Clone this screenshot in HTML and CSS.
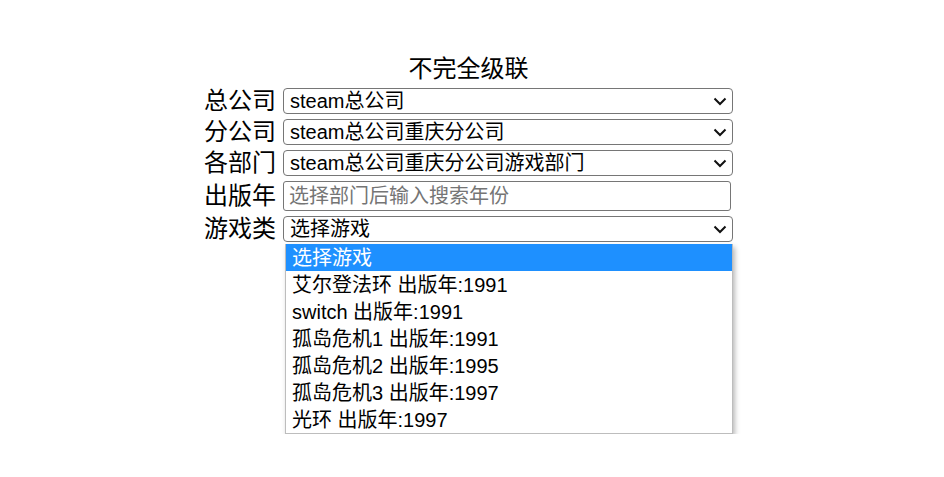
FILE: index.html
```html
<!DOCTYPE html>
<html lang="zh">
<head>
<meta charset="utf-8">
<title>不完全级联</title>
<link rel="stylesheet" href="styles.css">
</head>
<body>
<div class="page">
  <div class="panel">
    <div class="title">不完全级联</div>
    <div class="form">
      <span class="label">总公司</span>
      <div class="field">
        <div class="select">steam总公司</div>
        <svg class="chev" width="14" height="9" viewBox="0 0 14 9"><path d="M1.5 1.5 L7 7 L12.5 1.5" fill="none" stroke="#111" stroke-width="2"/></svg>
      </div>
      <span class="label">分公司</span>
      <div class="field">
        <div class="select">steam总公司重庆分公司</div>
        <svg class="chev" width="14" height="9" viewBox="0 0 14 9"><path d="M1.5 1.5 L7 7 L12.5 1.5" fill="none" stroke="#111" stroke-width="2"/></svg>
      </div>
      <span class="label">各部门</span>
      <div class="field">
        <div class="select">steam总公司重庆分公司游戏部门</div>
        <svg class="chev" width="14" height="9" viewBox="0 0 14 9"><path d="M1.5 1.5 L7 7 L12.5 1.5" fill="none" stroke="#111" stroke-width="2"/></svg>
      </div>
      <span class="label">出版年</span>
      <div class="field field-input">
        <input class="input" type="text" placeholder="选择部门后输入搜索年份">
      </div>
      <span class="label">游戏类</span>
      <div class="field">
        <div class="select">选择游戏</div>
        <svg class="chev" width="14" height="9" viewBox="0 0 14 9"><path d="M1.5 1.5 L7 7 L12.5 1.5" fill="none" stroke="#111" stroke-width="2"/></svg>
      </div>
      <div class="listbox">
        <div class="opt active">选择游戏</div>
        <div class="opt">艾尔登法环 出版年:1991</div>
        <div class="opt">switch 出版年:1991</div>
        <div class="opt">孤岛危机1 出版年:1991</div>
        <div class="opt">孤岛危机2 出版年:1995</div>
        <div class="opt">孤岛危机3 出版年:1997</div>
        <div class="opt">光环 出版年:1997</div>
      </div>
    </div>
  </div>
</div>
</body>
</html>
```

FILE: styles.css
```css
html, body {
  margin: 0;
  padding: 0;
  background: #ffffff;
}

body {
  font-family: "Liberation Sans", "Noto Sans CJK SC", sans-serif;
  color: #000;
}

.page {
  display: flex;
  justify-content: center;
  padding-top: 54px;
  padding-right: 7px;
}

.panel {
  width: 529px;
}

.title {
  font-size: 24px;
  line-height: 30px;
  height: 30px;
  text-align: center;
  margin-bottom: 4px;
}

.form {
  display: grid;
  grid-template-columns: 72px 450px;
  column-gap: 7px;
  row-gap: 5px;
  align-items: center;
}

.label {
  font-size: 24px;
  line-height: 26px;
  white-space: nowrap;
}

.field {
  position: relative;
  height: 26px;
}

.field-input {
  height: 30px;
}

.select {
  box-sizing: border-box;
  width: 450px;
  height: 26px;
  padding: 0 30px 0 6px;
  border: 1px solid #767676;
  border-radius: 4px;
  background: #fff;
  font-size: 20px;
  line-height: 24px;
  color: #000;
  white-space: nowrap;
}

.chev {
  position: absolute;
  right: 6px;
  top: 9px;
}

.input {
  box-sizing: border-box;
  width: 448px;
  height: 30px;
  margin: 0;
  padding: 0 5px;
  border: 1px solid #767676;
  border-radius: 3px;
  background: #fff;
  font-family: "Liberation Sans", "Noto Sans CJK SC", sans-serif;
  font-size: 20px;
  outline: none;
}

.input::placeholder {
  color: #757575;
}

.listbox {
  grid-column: 2;
  margin-top: -3px;
  margin-left: 2px;
  width: 448px;
  box-sizing: border-box;
  background: #fff;
  border: 1px solid #bdbdbd;
  border-top: 0;
  box-shadow: 2px 3px 5px rgba(0, 0, 0, 0.28);
}

.opt {
  height: 27px;
  line-height: 28px;
  padding: 0 6px;
  font-size: 20px;
  white-space: nowrap;
}

.opt.active {
  background: #1e90ff;
  color: #fff;
}
```
